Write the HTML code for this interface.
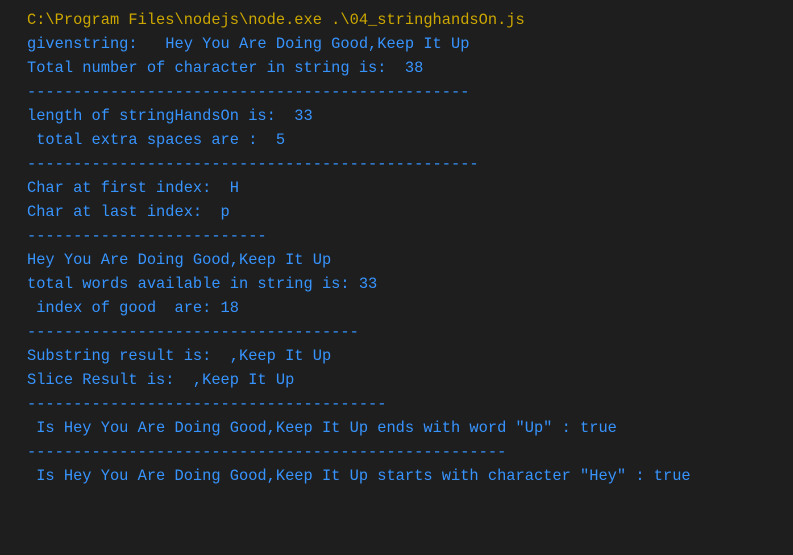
<!DOCTYPE html>
<html><head><style>
html,body{margin:0;padding:0;background:#1e1e1e;width:793px;height:555px;overflow:hidden}
pre{margin:0;position:absolute;left:27px;top:8px;font-family:"Liberation Mono",monospace;font-size:15.37px;line-height:24px;color:#3794ff}
.y{color:#cca700}
</style></head><body>
<pre><span class="y">C:\Program Files\nodejs\node.exe .\04_stringhandsOn.js</span>
givenstring:   Hey You Are Doing Good,Keep It Up
Total number of character in string is:  38
------------------------------------------------
length of stringHandsOn is:  33
 total extra spaces are :  5
-------------------------------------------------
Char at first index:  H
Char at last index:  p
--------------------------
Hey You Are Doing Good,Keep It Up
total words available in string is: 33
 index of good  are: 18
------------------------------------
Substring result is:  ,Keep It Up
Slice Result is:  ,Keep It Up
---------------------------------------
 Is Hey You Are Doing Good,Keep It Up ends with word "Up" : true
----------------------------------------------------
 Is Hey You Are Doing Good,Keep It Up starts with character "Hey" : true</pre>
</body></html>
